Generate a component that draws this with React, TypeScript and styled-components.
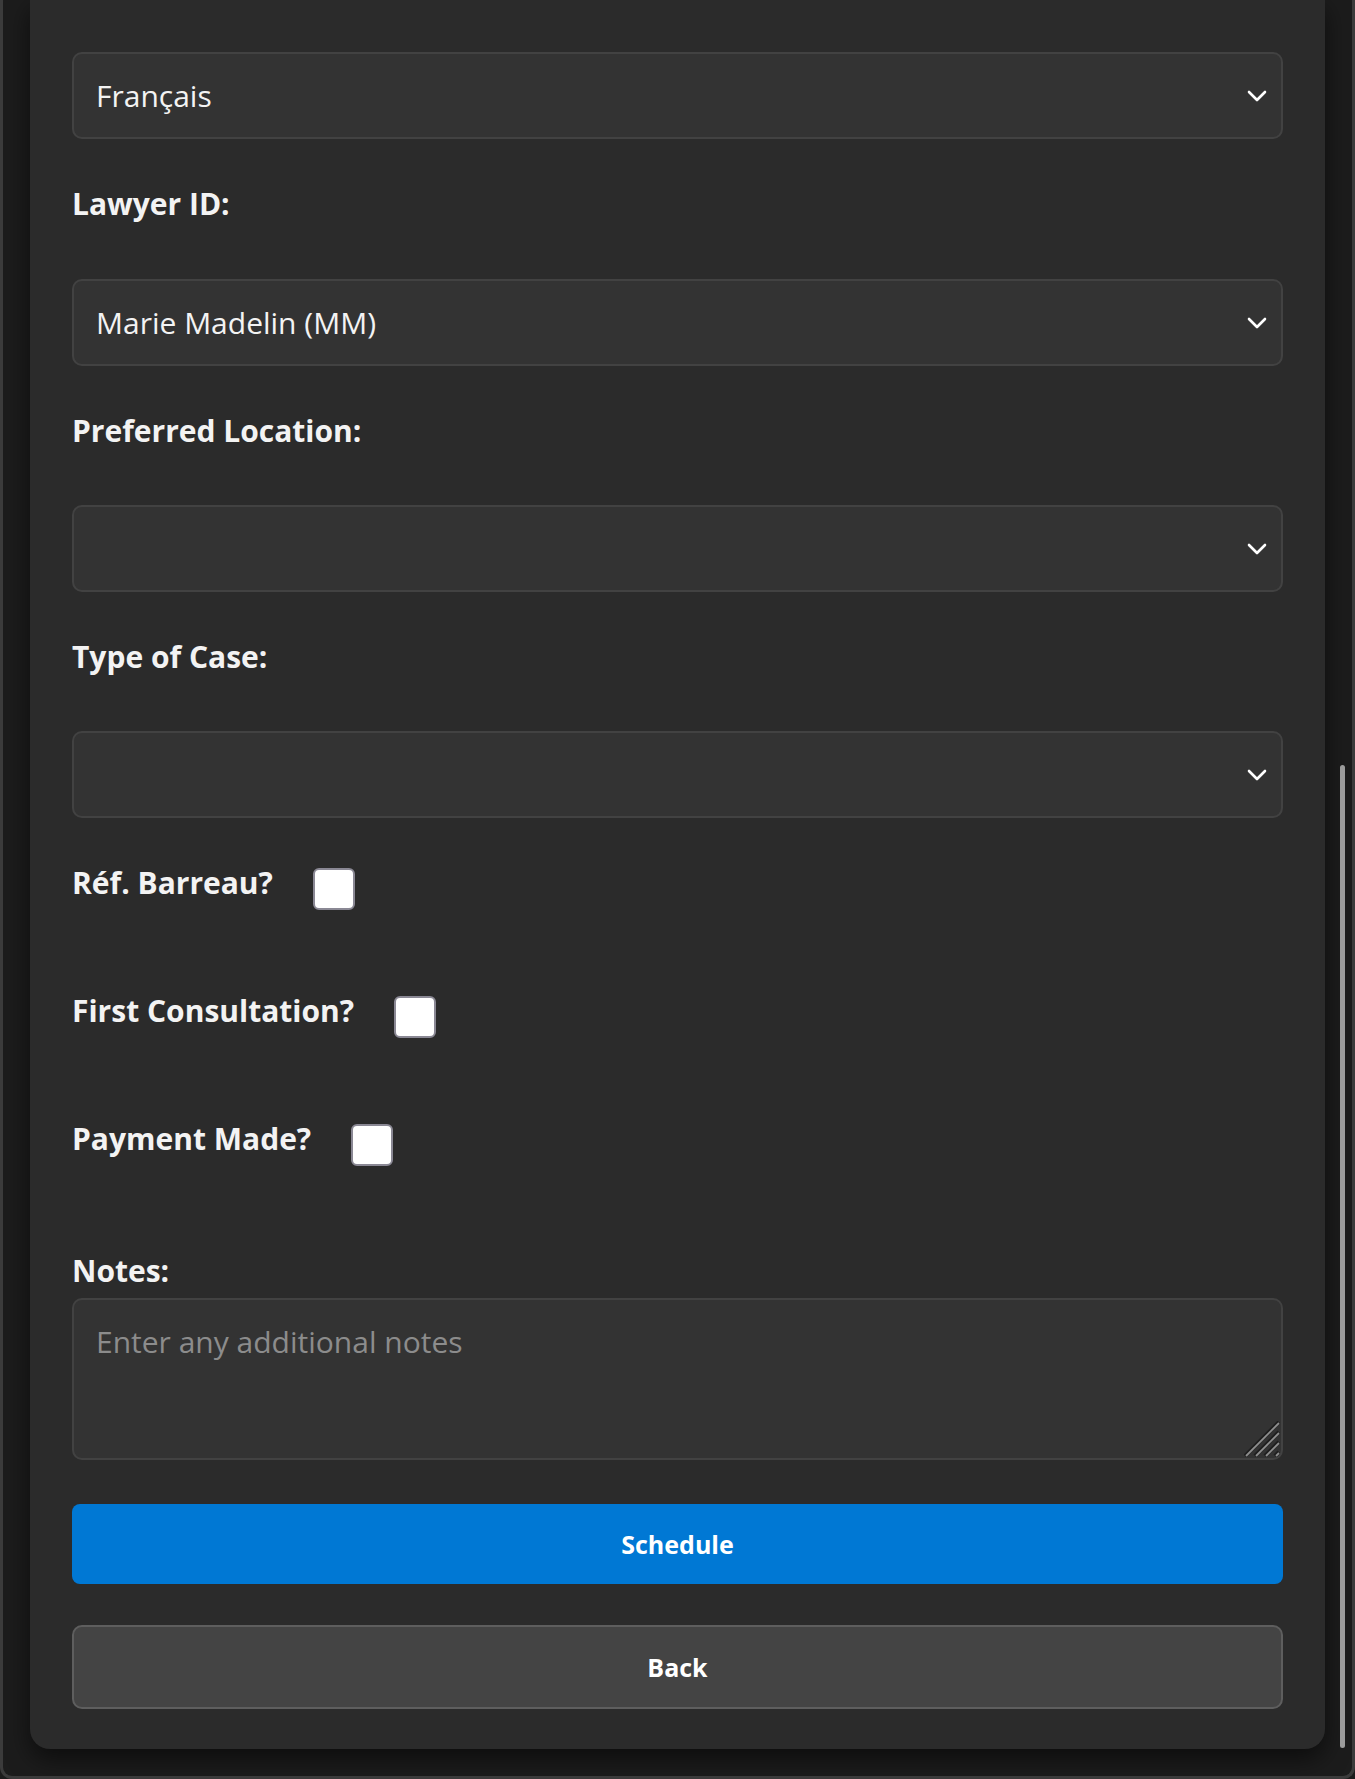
import React from "react";
import styled, { createGlobalStyle } from "styled-components";

const Global = createGlobalStyle`
  html, body { margin: 0; padding: 0; background: #1c1c1c; }
  * { box-sizing: border-box; }
`;

const Frame = styled.div`
  position: relative;
  width: 1355px;
  height: 1779px;
  overflow: hidden;
  background: #1c1c1c;
  border: 3px solid #3b3b3b;
  border-top: none;
  border-radius: 0 0 12px 12px;
  padding: 0 27px;
  font-family: "Open Sans", "Noto Sans", sans-serif;
  color: #f3f3f3;
`;

const Card = styled.form`
  display: flex;
  flex-direction: column;
  background: #2b2b2b;
  border-radius: 0 0 20px 20px;
  padding: 52px 42px 40px;
  box-shadow: 0 10px 24px rgba(0, 0, 0, 0.55);
`;

const SelectWrap = styled.div<{ $mt?: number }>`
  position: relative;
  margin-top: ${(p) => p.$mt ?? 0}px;
`;

const Select = styled.select`
  appearance: none;
  -webkit-appearance: none;
  width: 100%;
  height: 87px;
  background: #333333;
  border: 2px solid #424242;
  border-radius: 10px;
  color: #f3f3f3;
  font-family: "Open Sans", "Noto Sans", sans-serif;
  font-size: 30px;
  padding: 0 60px 0 22px;
  outline: none;
`;

const Chevron = styled.svg`
  position: absolute;
  right: 16px;
  top: 50%;
  transform: translateY(-50%);
  width: 20px;
  height: 12px;
  pointer-events: none;
`;

const Label = styled.label<{ $mt: number }>`
  display: block;
  margin-top: ${(p) => p.$mt}px;
  font-size: 30px;
  font-weight: 700;
  line-height: 42px;
  color: #f3f3f3;
`;

const CheckRow = styled.div<{ $mt: number }>`
  display: flex;
  align-items: flex-start;
  gap: 40px;
  margin-top: ${(p) => p.$mt}px;
`;

const CheckLabel = styled.span`
  font-size: 30px;
  font-weight: 700;
  line-height: 42px;
  color: #f3f3f3;
`;

const Check = styled.input`
  appearance: none;
  -webkit-appearance: none;
  margin: 6px 0 0;
  width: 42px;
  height: 42px;
  background: #ffffff;
  border: 2px solid #8a8894;
  border-radius: 6px;
`;

const NotesWrap = styled.div`
  position: relative;
  margin-top: 6px;
`;

const TextArea = styled.textarea`
  display: block;
  width: 100%;
  height: 162px;
  background: #333333;
  border: 2px solid #424242;
  border-radius: 10px;
  color: #f3f3f3;
  font-family: "Open Sans", "Noto Sans", sans-serif;
  font-size: 30px;
  padding: 21px 22px;
  outline: none;
  resize: none;
  &::placeholder {
    color: #8c8c8c;
  }
`;

const Grip = styled.svg`
  position: absolute;
  right: 3px;
  bottom: 3px;
  width: 36px;
  height: 36px;
  pointer-events: none;
`;

const Button = styled.button<{ $variant: "primary" | "secondary"; $mt: number }>`
  display: flex;
  align-items: center;
  justify-content: center;
  width: 100%;
  margin-top: ${(p) => p.$mt}px;
  height: ${(p) => (p.$variant === "primary" ? 80 : 84)}px;
  background: ${(p) => (p.$variant === "primary" ? "#0078d4" : "#444444")};
  border: ${(p) => (p.$variant === "primary" ? "none" : "2px solid #5e5e5e")};
  border-radius: ${(p) => (p.$variant === "primary" ? 8 : 10)}px;
  color: #ffffff;
  font-family: "Open Sans", "Noto Sans", sans-serif;
  font-size: 25px;
  font-weight: 700;
  cursor: pointer;
`;

const Scrollbar = styled.div`
  position: absolute;
  right: 7px;
  top: 765px;
  width: 5px;
  height: 983px;
  border-radius: 3px;
  background: #9b9b9b;
`;

const ChevronIcon = () => (
  <Chevron viewBox="0 0 20 12" fill="none">
    <path d="M2 2 L10 10 L18 2" stroke="#ffffff" strokeWidth="2.6" strokeLinecap="round" strokeLinejoin="round" />
  </Chevron>
);

const ResizeGrip = () => (
  <Grip viewBox="0 0 36 36" fill="none">
    <g stroke="#1e1e1e" strokeWidth="4">
      <path d="M1 35 L35 1" />
      <path d="M11 35 L35 11" />
      <path d="M21 35 L35 21" />
      <path d="M31 35 L35 31" />
    </g>
    <g stroke="#8e8e8e" strokeWidth="1.8">
      <path d="M2 35 L35 2" />
      <path d="M12 35 L35 12" />
      <path d="M22 35 L35 22" />
      <path d="M32 35 L35 32" />
    </g>
  </Grip>
);

const SelectField: React.FC<{ mt?: number; value: string; options: string[] }> = ({ mt, value, options }) => (
  <SelectWrap $mt={mt}>
    <Select defaultValue={value}>
      {options.map((o) => (
        <option key={o} value={o}>
          {o}
        </option>
      ))}
    </Select>
    <ChevronIcon />
  </SelectWrap>
);

export default function App() {
  return (
    <>
      <Global />
      <Frame>
        <Card onSubmit={(e) => e.preventDefault()}>
          <SelectField value="Français" options={["Français", "English"]} />
          <Label $mt={44}>Lawyer ID:</Label>
          <SelectField mt={54} value="Marie Madelin (MM)" options={["Marie Madelin (MM)"]} />
          <Label $mt={44}>Preferred Location:</Label>
          <SelectField mt={53} value="" options={[""]} />
          <Label $mt={44}>Type of Case:</Label>
          <SelectField mt={53} value="" options={[""]} />
          <CheckRow $mt={44}>
            <CheckLabel>Réf. Barreau?</CheckLabel>
            <Check type="checkbox" />
          </CheckRow>
          <CheckRow $mt={80}>
            <CheckLabel>First Consultation?</CheckLabel>
            <Check type="checkbox" />
          </CheckRow>
          <CheckRow $mt={80}>
            <CheckLabel>Payment Made?</CheckLabel>
            <Check type="checkbox" />
          </CheckRow>
          <Label $mt={84}>Notes:</Label>
          <NotesWrap>
            <TextArea placeholder="Enter any additional notes" />
            <ResizeGrip />
          </NotesWrap>
          <Button type="submit" $variant="primary" $mt={44}>
            Schedule
          </Button>
          <Button type="button" $variant="secondary" $mt={41}>
            Back
          </Button>
        </Card>
        <Scrollbar />
      </Frame>
    </>
  );
}
